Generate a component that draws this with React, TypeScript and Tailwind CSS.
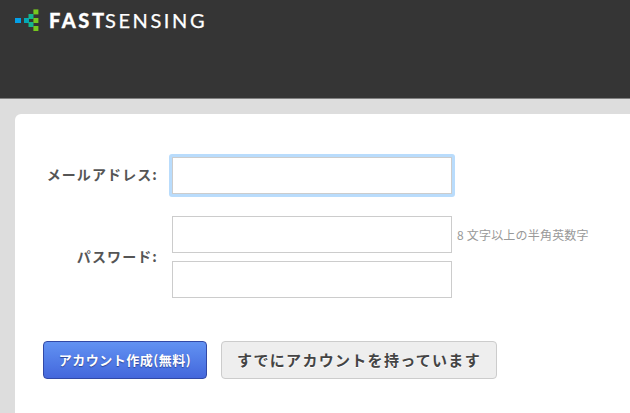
const jp = "font-['Noto_Sans_CJK_JP',sans-serif]";

const logoSquares = [
  { x: 15, y: 18, w: 6, fill: "#04a0e8" },
  { x: 24, y: 18, w: 5, fill: "#04a9b5" },
  { x: 28.5, y: 14, w: 5, fill: "#14b58c" },
  { x: 28.5, y: 22, w: 5, fill: "#14b58c" },
  { x: 33.4, y: 9.4, w: 5, fill: "#76c81e" },
  { x: 33.4, y: 18, w: 5, fill: "#76c81e" },
  { x: 33.4, y: 26, w: 5, fill: "#76c81e" },
];

function Logo() {
  return (
    <div className="flex h-[41px] items-center">
      <svg className="h-[41px] w-[49px] shrink-0" viewBox="0 0 49 41">
        {logoSquares.map((s, i) => (
          <rect key={i} x={s.x} y={s.y} width={s.w} height={5} fill={s.fill} />
        ))}
      </svg>
      <svg className="h-[41px] w-[160px]" viewBox="0 0 160 41" fill="#fff" fontFamily="Lato, sans-serif" fontSize="20">
        <text x="0" y="27.5" fontWeight="900" textLength="55" lengthAdjust="spacing" stroke="#fff" strokeWidth="0.3">FAST</text>
        <text x="56" y="27.5" textLength="99.5" lengthAdjust="spacing" stroke="#fff" strokeWidth="0.25">SENSING</text>
      </svg>
    </div>
  );
}

export default function App() {
  return (
    <div className={`h-[413px] w-[630px] overflow-hidden bg-[#dddddd] ${jp}`}>
      <header className="h-[99px] border-b border-[#808080] bg-[#353535]">
        <Logo />
      </header>
      <main className="mt-[15px] ml-[15px] h-[299px] rounded-tl-[6px] bg-white pt-[43px]">
        <div className="flex h-[37px] items-center">
          <label className="w-[143px] shrink-0 pb-[4px] text-right text-[14px] leading-5 font-bold tracking-[1.1px] whitespace-nowrap text-[#555]">メールアドレス:</label>
          <div className="-my-[3px] ml-[11px] rounded-[3px] bg-[#b9dcfc] p-[3px]">
            <input className="block h-[37px] w-[280px] border border-[#ccc] bg-white px-2 outline-none" />
          </div>
        </div>
        <div className="mt-[22px] flex h-[82px] items-center">
          <label className="w-[143px] shrink-0 pb-[3px] text-right text-[14px] leading-5 font-bold tracking-[1.1px] whitespace-nowrap text-[#555]">パスワード:</label>
          <div className="ml-[14px] flex flex-col gap-2">
            <div className="flex items-center">
              <input className="h-[37px] w-[280px] border border-[#ccc] bg-white px-2 outline-none" />
              <span className="ml-[5px] text-[12px] leading-5 tracking-[0.2px] whitespace-nowrap text-[#999]">8 文字以上の半角英数字</span>
            </div>
            <input className="h-[37px] w-[280px] border border-[#ccc] bg-white px-2 outline-none" />
          </div>
        </div>
        <div className="mt-[43px] ml-[28px] flex gap-[14px]">
          <button className="h-[38px] w-[164px] rounded-[4px] border border-[#3249a6] bg-linear-to-b from-[#6292f2] to-[#4467dc] text-[13px] font-bold tracking-[0.5px] whitespace-nowrap text-white [text-shadow:0_1px_1px_#2c4596]">アカウント作成(無料)</button>
          <button className="h-[38px] w-[276px] rounded-[4px] border border-[#ccc] bg-[#eee] text-[15px] font-bold tracking-[1.3px] whitespace-nowrap text-[#444] [text-shadow:0_1px_0_#fff]">すでにアカウントを持っています</button>
        </div>
      </main>
    </div>
  );
}
